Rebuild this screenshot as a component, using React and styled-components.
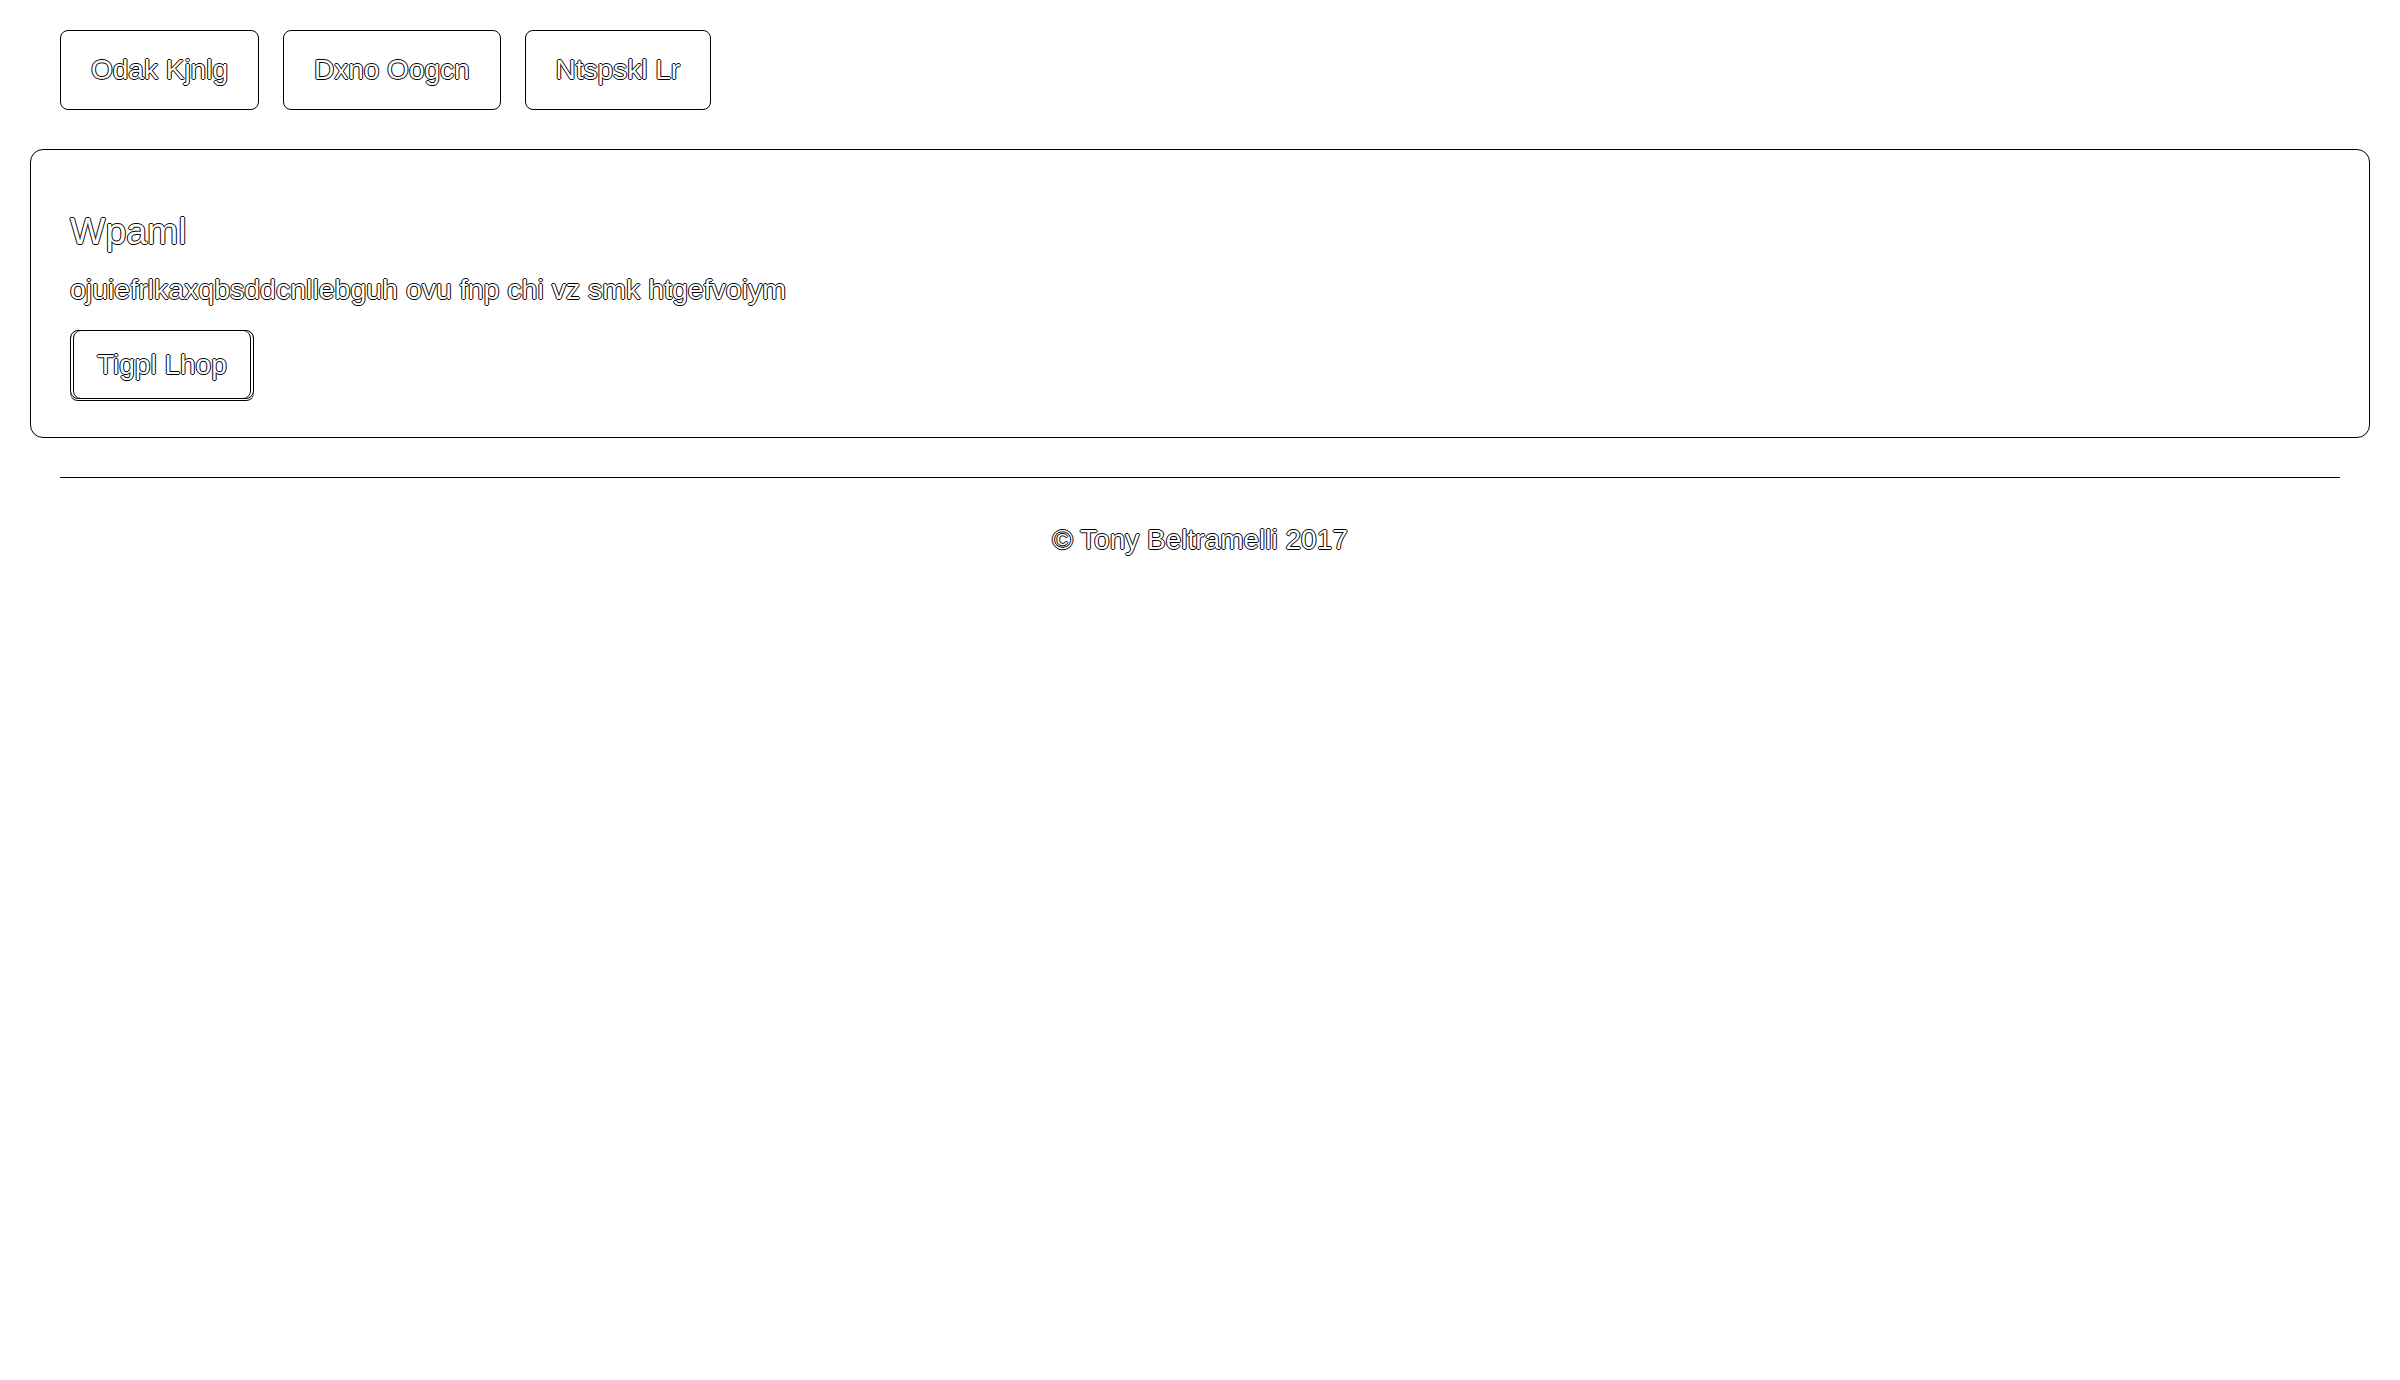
import React from "react";
import styled, { createGlobalStyle } from "styled-components";

const Global = createGlobalStyle`
  html, body {
    margin: 0;
    padding: 0;
    background: #fff;
  }
  body {
    font-family: "Liberation Sans", Arial, sans-serif;
  }
`;

const outlined = `
  color: #fff;
  text-shadow:
    1px 0 0 #000,
    -1px 0 0 #000,
    0 1px 0 #000,
    0 -1px 0 #000;
  font-family: "Liberation Sans", Arial, sans-serif;
`;

const Page = styled.div`
  width: 2400px;
  display: flex;
  flex-direction: column;
`;

const Header = styled.header`
  display: flex;
  gap: 24px;
  padding: 30px 60px 0;
`;

const NavButton = styled.a`
  ${outlined}
  display: block;
  box-sizing: border-box;
  height: 80px;
  line-height: 78px;
  padding: 0 30px;
  font-size: 28px;
  border: 1px solid #000;
  border-radius: 8px;
  background: #fff;
  text-decoration: none;
`;

const Card = styled.section`
  box-sizing: border-box;
  margin: 39px 30px 0;
  padding: 61px 39px 38px;
  border: 1px solid #000;
  border-radius: 13px;
  display: flex;
  flex-direction: column;
  align-items: flex-start;
`;

const Title = styled.h4`
  ${outlined}
  margin: 0 0 18px;
  font-size: 37.5px;
  font-weight: 400;
  line-height: 40px;
`;

const Text = styled.p`
  ${outlined}
  margin: 0 0 21px;
  font-size: 28.5px;
  line-height: 40px;
`;

const ActionButton = styled.a`
  ${outlined}
  display: block;
  box-sizing: border-box;
  height: 69px;
  line-height: 67px;
  padding: 0 26px;
  font-size: 28px;
  border: 1px solid #000;
  border-radius: 8px;
  background: #fff;
  text-decoration: none;
  box-shadow:
    inset 2px 0 0 #fff,
    inset 3px 0 0 #000,
    inset -2px 0 0 #fff,
    inset -3px 0 0 #000,
    0 1px 0 #fff,
    0 2px 0 #000;
`;

const Rule = styled.hr`
  margin: 39px 60px 0;
  border: 0;
  border-top: 1px solid #000;
  height: 0;
`;

const Footer = styled.footer`
  ${outlined}
  margin-top: 42px;
  text-align: center;
  font-size: 28px;
  line-height: 40px;
`;

export default function App() {
  return (
    <Page>
      <Global />
      <Header>
        <NavButton href="#">Odak Kjnlg</NavButton>
        <NavButton href="#">Dxno Oogcn</NavButton>
        <NavButton href="#">Ntspskl Lr</NavButton>
      </Header>
      <Card>
        <Title>Wpaml</Title>
        <Text>ojuiefrlkaxqbsddcnllebguh ovu fnp chi vz smk htgefvoiym</Text>
        <ActionButton href="#">Tigpl Lhop</ActionButton>
      </Card>
      <Rule />
      <Footer>© Tony Beltramelli 2017</Footer>
    </Page>
  );
}
